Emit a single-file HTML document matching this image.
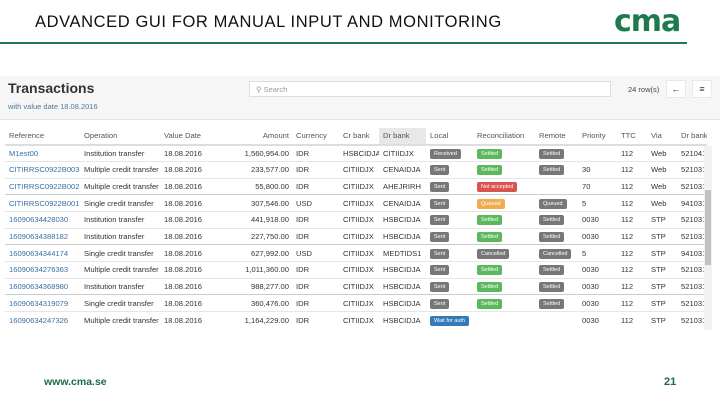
<!DOCTYPE html>
<html><head><meta charset="utf-8"><style>
*{margin:0;padding:0;box-sizing:border-box}
body{width:720px;height:405px;background:#fff;position:relative;overflow:hidden;font-family:"Liberation Sans",sans-serif}
.title{position:absolute;left:35px;top:13px;font-size:16.5px;color:#111;letter-spacing:0.6px}
.logo{position:absolute;left:614px;top:4px;font-size:30px;font-weight:bold;color:#1d7a4e;letter-spacing:-1px;font-family:"DejaVu Sans",sans-serif}
.rule{position:absolute;left:0;top:42px;width:687px;height:2px;background:#1d7a4e}
.hdr{position:absolute;left:0;top:76px;width:720px;height:44px;background:#f6f6f6;border-bottom:1px solid #e3e3e3}
.h1{position:absolute;left:8px;top:80px;font-size:14px;font-weight:bold;color:#333}
.sub{position:absolute;left:8px;top:102px;font-size:7.5px;color:#4a7aa0}
.search{position:absolute;left:249px;top:81px;width:362px;height:16px;border:1px solid #ddd;background:#fff;font-size:7.5px;color:#999;padding:3px 0 0 6px}
.rows{position:absolute;left:628px;top:85px;font-size:7.5px;color:#444}
.btn{position:absolute;top:80px;width:20px;height:18px;background:#fff;border:1px solid #e8e8e8;font-size:9px;text-align:center;line-height:16px;color:#333}
table{position:absolute;left:5px;top:128px;width:702px;border-collapse:collapse;font-size:7.6px;color:#333;table-layout:fixed}
td,th{height:16.7px;white-space:nowrap;overflow:hidden;font-weight:normal;text-align:left;padding-left:4px}
th{color:#555;border-bottom:2px solid #ddd;background:#fff}
tr.g td{border-top:1px solid #e6e6e6}
tbody tr:nth-child(3n+1) td{border-top:1px solid #ccc}
tr{background:#fff}
.r{text-align:right;padding-right:3px}
.l{color:#3b6fa0}
.b{display:inline-block;font-size:5.5px;color:#fff;padding:2px 4px;border-radius:2px;line-height:6px}
.gr{background:#777}.gn{background:#5cb85c}.rd{background:#d9534f}.or{background:#f0ad4e}.bl{background:#337ab7}
.sb{position:absolute;left:704px;top:146px;width:8px;height:184px;background:#f1f1f1}
.th{position:absolute;left:705px;top:190px;width:6px;height:75px;background:#c1c1c1}
.ft{position:absolute;left:44px;top:376px;font-size:10.5px;font-weight:bold;color:#1d6a45}
.pg{position:absolute;left:664px;top:376px;font-size:11px;font-weight:bold;color:#1d6a45}
</style></head><body>
<div class="title">ADVANCED GUI FOR MANUAL INPUT AND MONITORING</div>
<div class="logo">cma</div>
<div class="rule"></div>
<div class="hdr"></div>
<div class="h1">Transactions</div>
<div class="sub">with value date 18.08.2016</div>
<div class="search">&#9906; Search</div>
<div class="rows">24 row(s)</div>
<div class="btn" style="left:666px">&#8592;</div>
<div class="btn" style="left:692px">&#8801;</div>
<table>
<colgroup><col style="width:75px"><col style="width:80px"><col style="width:62px"><col style="width:70px"><col style="width:47px"><col style="width:40px"><col style="width:47px"><col style="width:47px"><col style="width:62px"><col style="width:43px"><col style="width:39px"><col style="width:30px"><col style="width:30px"><col style="width:30px"></colgroup>
<thead><tr><th>Reference</th><th>Operation</th><th>Value Date</th><th class="r">Amount</th><th>Currency</th><th>Cr bank</th><th style="background:#e8e8e8">Dr bank</th><th>Local</th><th>Reconciliation</th><th>Remote</th><th>Priority</th><th>TTC</th><th>Via</th><th>Dr bank a</th></tr></thead>
<tbody>
<tr><td class="l">M1est00</td><td>Institution transfer</td><td>18.08.2016</td><td class="r">1,560,954.00</td><td>IDR</td><td>HSBCIDJA</td><td>CITIIDJX</td><td><span class="b gr">Received</span></td><td><span class="b gn">Settled</span></td><td><span class="b gr">Settled</span></td><td></td><td>112</td><td>Web</td><td>521041</td></tr>
<tr class="g"><td class="l">CITIRRSC0922B003</td><td>Multiple credit transfer</td><td>18.08.2016</td><td class="r">233,577.00</td><td>IDR</td><td>CITIIDJX</td><td>CENAIDJA</td><td><span class="b gr">Sent</span></td><td><span class="b gn">Settled</span></td><td><span class="b gr">Settled</span></td><td>30</td><td>112</td><td>Web</td><td>521031</td></tr>
<tr class="g"><td class="l">CITIRRSC0922B002</td><td>Multiple credit transfer</td><td>18.08.2016</td><td class="r">55,800.00</td><td>IDR</td><td>CITIIDJX</td><td>AHEJRIRH</td><td><span class="b gr">Sent</span></td><td><span class="b rd">Not accepted</span></td><td></td><td>70</td><td>112</td><td>Web</td><td>521031</td></tr>
<tr><td class="l">CITIRRSC0922B001</td><td>Single credit transfer</td><td>18.08.2016</td><td class="r">307,546.00</td><td>USD</td><td>CITIIDJX</td><td>CENAIDJA</td><td><span class="b gr">Sent</span></td><td><span class="b or">Queued</span></td><td><span class="b gr">Queued</span></td><td>5</td><td>112</td><td>Web</td><td>941031</td></tr>
<tr class="g"><td class="l">16090634428030</td><td>Institution transfer</td><td>18.08.2016</td><td class="r">441,918.00</td><td>IDR</td><td>CITIIDJX</td><td>HSBCIDJA</td><td><span class="b gr">Sent</span></td><td><span class="b gn">Settled</span></td><td><span class="b gr">Settled</span></td><td>0030</td><td>112</td><td>STP</td><td>521031</td></tr>
<tr class="g"><td class="l">16090634388182</td><td>Institution transfer</td><td>18.08.2016</td><td class="r">227,750.00</td><td>IDR</td><td>CITIIDJX</td><td>HSBCIDJA</td><td><span class="b gr">Sent</span></td><td><span class="b gn">Settled</span></td><td><span class="b gr">Settled</span></td><td>0030</td><td>112</td><td>STP</td><td>521031</td></tr>
<tr><td class="l">16090634344174</td><td>Single credit transfer</td><td>18.08.2016</td><td class="r">627,992.00</td><td>USD</td><td>CITIIDJX</td><td>MEDTIDS1</td><td><span class="b gr">Sent</span></td><td><span class="b gr">Cancelled</span></td><td><span class="b gr">Cancelled</span></td><td>5</td><td>112</td><td>STP</td><td>941031</td></tr>
<tr class="g"><td class="l">16090634276363</td><td>Multiple credit transfer</td><td>18.08.2016</td><td class="r">1,011,360.00</td><td>IDR</td><td>CITIIDJX</td><td>HSBCIDJA</td><td><span class="b gr">Sent</span></td><td><span class="b gn">Settled</span></td><td><span class="b gr">Settled</span></td><td>0030</td><td>112</td><td>STP</td><td>521031</td></tr>
<tr class="g"><td class="l">16090634368980</td><td>Institution transfer</td><td>18.08.2016</td><td class="r">988,277.00</td><td>IDR</td><td>CITIIDJX</td><td>HSBCIDJA</td><td><span class="b gr">Sent</span></td><td><span class="b gn">Settled</span></td><td><span class="b gr">Settled</span></td><td>0030</td><td>112</td><td>STP</td><td>521031</td></tr>
<tr><td class="l">16090634319079</td><td>Single credit transfer</td><td>18.08.2016</td><td class="r">360,476.00</td><td>IDR</td><td>CITIIDJX</td><td>HSBCIDJA</td><td><span class="b gr">Sent</span></td><td><span class="b gn">Settled</span></td><td><span class="b gr">Settled</span></td><td>0030</td><td>112</td><td>STP</td><td>521031</td></tr>
<tr class="g"><td class="l">16090634247326</td><td>Multiple credit transfer</td><td>18.08.2016</td><td class="r">1,164,229.00</td><td>IDR</td><td>CITIIDJX</td><td>HSBCIDJA</td><td><span class="b bl">Wait for auth</span></td><td></td><td></td><td>0030</td><td>112</td><td>STP</td><td>521031</td></tr>
</tbody></table>
<div class="sb"></div><div class="th"></div>
<div class="ft">www.cma.se</div>
<div class="pg">21</div>
</body></html>
